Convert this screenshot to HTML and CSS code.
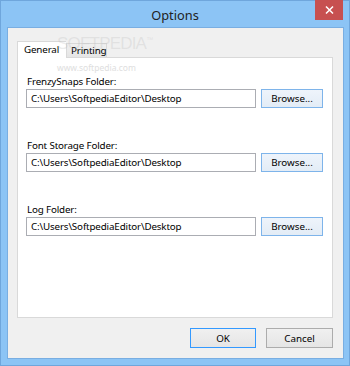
FILE: index.html
```html
<!DOCTYPE html>
<html lang="en">
<head>
	<meta charset="UTF-8">
	<title>Options</title>
	<link rel="stylesheet" href="styles.css">
</head>
<body>
	<div class="window">
		<div class="titlebar">
			<span class="title">Options</span>
			<a href="javascript:;" class="close">
				<svg width="9" height="8" viewBox="0 0 9 8"><path d="M1 0.5 L8 7.5 M8 0.5 L1 7.5" stroke="#fff" stroke-width="1.5"/></svg>
			</a>
		</div>
		<div class="client">
			<div class="tabs">
				<span class="tab on">General</span>
				<span class="tab">Printing</span>
			</div>
			<div class="panel">
				<div class="group">
					<div class="label">FrenzySnaps Folder:</div>
					<div class="row">
						<input class="field" type="text" value="C:\Users\SoftpediaEditor\Desktop">
						<button class="btn browse">Browse...</button>
					</div>
				</div>
				<div class="group">
					<div class="label">Font Storage Folder:</div>
					<div class="row">
						<input class="field" type="text" value="C:\Users\SoftpediaEditor\Desktop">
						<button class="btn browse">Browse...</button>
					</div>
				</div>
				<div class="group">
					<div class="label">Log Folder:</div>
					<div class="row">
						<input class="field" type="text" value="C:\Users\SoftpediaEditor\Desktop">
						<button class="btn browse">Browse...</button>
					</div>
				</div>
			</div>
			<div class="actions">
				<button class="btn ok">OK</button>
				<button class="btn cancel">Cancel</button>
			</div>
			<div class="mark">SOFTPEDIA<sup>™</sup></div>
			<div class="mark-url">www.softpedia.com</div>
		</div>
	</div>
</body>
</html>
```

FILE: styles.css
```css
*{
	box-sizing:border-box;
}
body{
	margin:0;
	font-family:"Noto Sans","Open Sans",sans-serif;
	font-size:9.8px;
	letter-spacing:-0.15px;
	color:#000;
}
.window{
	width:350px;
	height:366px;
	background:#8cc4f5;
	border:1px solid #6fa6dc;
	display:flex;
	flex-direction:column;
}
.titlebar{
	height:26px;
	flex:none;
	position:relative;
	display:flex;
	align-items:center;
	justify-content:center;
}
.title{
	font-size:12.8px;
	letter-spacing:0;
	color:#222;
	margin-top:1px;
}
.close{
	position:absolute;
	top:-1px;
	right:6px;
	width:28px;
	height:20px;
	background:#c75050;
	display:flex;
	align-items:center;
	justify-content:center;
}
.client{
	position:relative;
	height:332px;
	flex:none;
	margin:0 5px 6px 6px;
	background:#f0f0f0;
	border:1px solid #79aee2;
	padding:13px 10px 10px 9px;
	display:flex;
	flex-direction:column;
}
.tabs{
	display:flex;
	align-items:flex-end;
	height:16px;
	flex:none;
	position:relative;
	z-index:2;
}
.tab{
	display:block;
	height:14px;
	line-height:13px;
	padding:0 4px;
	background:linear-gradient(#f0f0f0,#e5e5e5);
	border:1px solid #d9d9d9;
	border-bottom:none;
}
.tab.on{
	width:49px;
	height:17px;
	line-height:16px;
	background:#fff;
	padding:0 0 0 6px;
	margin-bottom:-1px;
	border-right:none;
}
.tab + .tab{
	width:41px;
}
.panel{
	height:261px;
	flex:none;
	background:#fff;
	border:1px solid #d9d9d9;
	padding:17px 9px 0 8px;
}
.group{
	height:64px;
}
.label{
	height:14px;
	line-height:13px;
	padding-left:1px;
}
.row{
	display:flex;
	gap:5px;
}
.field{
	width:230px;
	height:19px;
	margin:0;
	border:1px solid #abadb3;
	padding:0 4px;
	font-family:inherit;
	font-size:9.8px;
	letter-spacing:-0.15px;
	color:#000;
	outline:none;
}
.btn{
	height:20px;
	margin:0;
	padding:0;
	border:1px solid #acacac;
	background:linear-gradient(#f0f0f0,#e5e5e5);
	font-family:inherit;
	font-size:9.8px;
	color:#000;
}
.browse{
	width:62px;
	height:19px;
	border-color:#7eb4ea;
	background:linear-gradient(#eef4fb,#e3ecf6);
}
.actions{
	display:flex;
	justify-content:flex-end;
	gap:10px;
	margin-top:10px;
}
.ok{
	width:66px;
	border-color:#3399ff;
}
.cancel{
	width:67px;
}
.mark{
	position:absolute;
	left:49px;
	top:6px;
	font-size:17px;
	letter-spacing:-0.8px;
	color:rgba(190,190,190,.3);
	font-family:"Liberation Sans",sans-serif;
	pointer-events:none;
	z-index:3;
}
.mark sup{
	font-size:7px;
}
.mark-url{
	position:absolute;
	left:49px;
	top:34px;
	font-size:8.5px;
	letter-spacing:0;
	color:#dedede;
	pointer-events:none;
}
```
